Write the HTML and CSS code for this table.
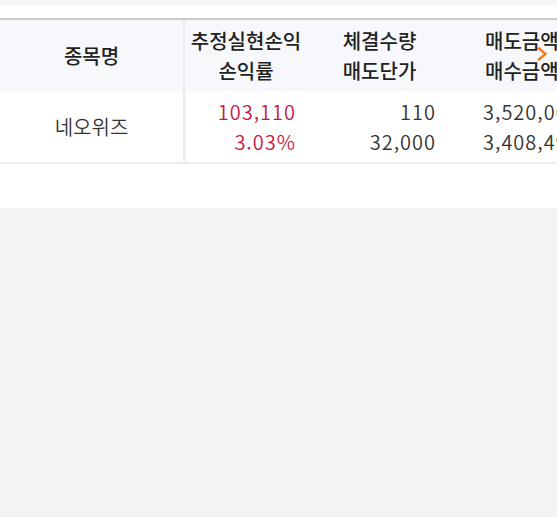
FILE: index.html
```html
<!DOCTYPE html>
<html lang="ko">
<head>
<meta charset="utf-8">
<link rel="stylesheet" href="styles.css">
</head>
<body>
<div class="topstrip"></div>
<div class="table-wrap">
  <div class="grid">
    <div class="cell head c1"><span>종목명</span></div>
    <div class="cell head c2"><span>추정실현손익</span><span>손익률</span></div>
    <div class="cell head c3"><span>체결수량</span><span>매도단가</span></div>
    <div class="cell head c4"><span>매도금액</span><span>매수금액</span></div>

    <div class="cell body c1"><span>네오위즈</span></div>
    <div class="cell body c2 num red"><span>103,110</span><span>3.03%</span></div>
    <div class="cell body c3 num"><span>110</span><span>32,000</span></div>
    <div class="cell body c4 num left"><span>3,520,000</span><span>3,408,490</span></div>
  </div>
  <div class="more" aria-hidden="true">
    <svg width="11" height="14" viewBox="0 0 11 14"><path d="M2 1.5 L8.5 7 L2 12.5" fill="none" stroke="#f47a20" stroke-width="2.4" stroke-linecap="square"/></svg>
  </div>
</div>
<div class="spacer"></div>
<div class="rest"></div>
</body>
</html>
```

FILE: styles.css
```css
html, body {
  margin: 0;
  padding: 0;
  background: #fff;
  font-family: "Noto Sans CJK KR", "Noto Sans", sans-serif;
  overflow: hidden;
  height: 517px;
}
.topstrip {
  height: 5px;
  background: #f5f5f5;
}
.table-wrap {
  position: relative;
  margin-top: 13px;
  border-top: 2px solid #cbcbcb;
  border-bottom: 2px solid #eeeeef;
  overflow: hidden;
  width: 557px;
}
.grid {
  display: grid;
  grid-template-columns: 185px 122px 145px 150px;
  width: 602px;
}
.cell {
  display: flex;
  flex-direction: column;
  justify-content: center;
  height: 71px;
  font-size: 20px;
  line-height: 30px;
  white-space: nowrap;
}
.head {
  background: #f7f8fc;
  color: #222;
  font-weight: 500;
  align-items: center;
}
.head.c4 {
  align-items: flex-start;
  padding-left: 33px;
}
.body {
  color: #333;
  font-weight: 350;
  align-items: center;
}
.c1 {
  border-right: 2px solid #ebebef;
  box-shadow: 1px 0 2px rgba(0,0,0,0.04);
}
.num {
  align-items: flex-end;
  padding-right: 11px;
  letter-spacing: 1px;
}
.c3.num {
  padding-right: 16px;
}
.num.left {
  align-items: flex-start;
  padding-left: 31px;
  padding-right: 0;
}
.red {
  color: #c8163f;
}
.more {
  position: absolute;
  right: 9px;
  top: 27px;
  line-height: 0;
}
.spacer {
  height: 44px;
}
.rest {
  height: 400px;
  background: #f3f3f5;
}
```
